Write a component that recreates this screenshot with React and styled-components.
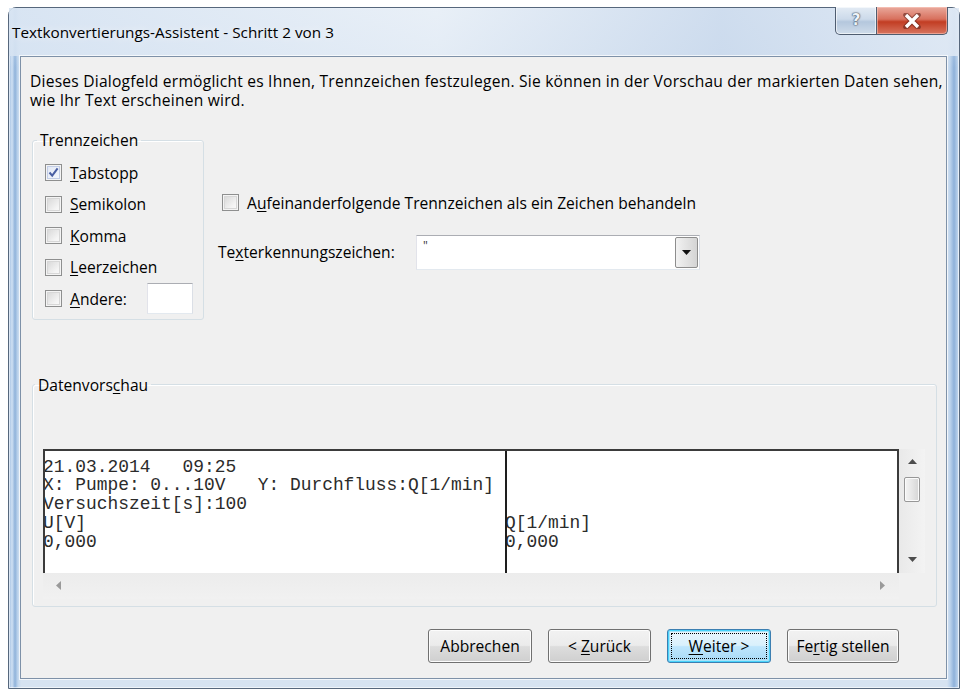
import React from "react";
import styled, { createGlobalStyle, css } from "styled-components";

const GlobalStyle = createGlobalStyle`
  html, body {
    margin: 0;
    padding: 0;
    background: #ffffff;
  }
  body {
    font-family: "Open Sans", "Noto Sans", sans-serif;
    font-size: 15.6px;
    color: #000;
    overflow: hidden;
  }
`;

const Screen = styled.div`
  width: 963px;
  height: 689px;
  box-sizing: border-box;
  padding: 7px 3px 0 8px;
  overflow: hidden;
`;

const Window = styled.div`
  height: 682px;
  box-sizing: border-box;
  border: 1px solid #56677c;
  border-radius: 8px 8px 0 0;
  display: flex;
  flex-direction: column;
  background:
    linear-gradient(to bottom, rgba(255,255,255,0.5), rgba(255,255,255,0) 60px),
    linear-gradient(to right, #9fbde0 0px, #cfe0f3 3px, #8fb2da 6px, #c2d7ee 9px, #d6e3f1 12px,
      #d6e3f1 calc(100% - 12px), #bdd4ed calc(100% - 9px), #8eb1da calc(100% - 5px), #c8dcf1 100%);
  box-shadow: inset 0 0 0 1px rgba(255,255,255,0.6);
`;

const TitleBar = styled.div`
  height: 48px;
  display: flex;
  align-items: flex-start;
  justify-content: space-between;
  padding: 0 11px 0 3px;
  background: linear-gradient(to right, rgba(214,227,242,0.9), rgba(232,239,247,0.7) 45%, rgba(200,216,236,0.8) 75%, rgba(222,232,244,0.9));
`;

const Title = styled.div`
  margin-top: 14px;
  font-size: 15.3px;
  color: #000;
  text-shadow: 0 0 8px rgba(255,255,255,0.9);
`;

const CaptionButtons = styled.div`
  display: flex;
  margin-top: -1px;
`;

const CaptionButton = styled.div`
  height: 28px;
  display: flex;
  align-items: center;
  justify-content: center;
  box-sizing: border-box;
  border: 1px solid #4f5d70;
  border-top: none;
  ${(p) =>
    p.$close
      ? css`
          width: 71px;
          border-left: none;
          border-radius: 0 0 5px 0;
          background: linear-gradient(to bottom, #e9a99c 0%, #d8705d 45%, #c23d23 55%, #d7745f 100%);
          box-shadow: inset 0 0 0 1px rgba(255, 210, 200, 0.5);
        `
      : css`
          width: 42px;
          border-radius: 0 0 0 5px;
          background: linear-gradient(to bottom, #e3ebf4 0%, #ccdaea 45%, #b4c7dd 55%, #cfdcea 100%);
          box-shadow: inset 0 0 0 1px rgba(255, 255, 255, 0.6);
        `}
`;

const HelpGlyph = styled.span`
  font-family: "DejaVu Sans", sans-serif;
  font-weight: bold;
  font-size: 15px;
  color: #eef3f8;
  text-shadow: 0 0 1px #4a5566, 0 0 1px #4a5566, 0 0 2px #4a5566;
  margin-top: -2px;
`;

const ClientArea = styled.div`
  flex: 1;
  margin: 0 12px 9px 11px;
  border: 1px solid #7e91a8;
  background: #f0f0f0;
  box-shadow: 0 0 0 1px rgba(255, 255, 255, 0.7);
  display: flex;
  flex-direction: column;
  padding: 15px 9px 0 9px;
`;

const Description = styled.p`
  margin: 0;
  line-height: 19px;
  white-space: nowrap;
  letter-spacing: 0.22px;
`;

const OptionsRow = styled.div`
  display: flex;
  align-items: flex-start;
  margin-top: 20px;
`;

const Group = styled.fieldset`
  margin: 0 0 0 2px;
  border: 1px solid #d5dfe5;
  border-radius: 3px;
  box-shadow: inset 1px 1px 0 #fff;
  box-sizing: border-box;
  min-width: 0;
  ${(p) => p.$width && css`width: ${p.$width}px;`}
  padding: ${(p) => p.$padding};
`;

const Legend = styled.legend`
  margin-left: ${(p) => p.$offset}px;
  padding: 0 3px;
  line-height: 20px;
`;

const CheckRow = styled.label`
  height: 31.5px;
  display: flex;
  align-items: center;
  gap: 8px;
  white-space: nowrap;
`;

const Box = styled.span`
  width: 17px;
  height: 17px;
  flex: none;
  box-sizing: border-box;
  border: 1px solid #8e8f8f;
  background: ${(p) =>
    p.$checked
      ? "linear-gradient(135deg, #dfe6f4, #f7f9fd)"
      : "linear-gradient(135deg, #d4d4d4, #f4f4f4 70%, #fbfbfb)"};
  box-shadow: inset 0 0 0 1px #f4f4f4, inset 0 0 0 2px ${(p) => (p.$checked ? "#c2cde6" : "#d7d7d7")};
  display: flex;
  align-items: center;
  justify-content: center;
`;

const Key = styled.span`
  text-decoration: underline;
  text-underline-offset: 2px;
`;

const OtherInput = styled.span`
  width: 46px;
  height: 31px;
  margin-left: auto;
  box-sizing: border-box;
  background: #fff;
  border: 1px solid #abadb3;
  border-color: #abadb3 #dbdfe6 #e3e9ef #e2e3ea;
`;

const OtherRow = styled(CheckRow)`
  width: 148px;
`;

const SideOptions = styled.div`
  display: flex;
  flex-direction: column;
  margin-left: 18px;
  padding-top: 57px;
  gap: 16px;
`;

const FieldRow = styled.div`
  display: flex;
  align-items: center;
  height: 35px;
  margin-left: -4px;
`;

const FieldLabel = styled.span`
  width: 198px;
  flex: none;
`;

const Combo = styled.div`
  width: 284px;
  height: 35px;
  box-sizing: border-box;
  background: #fff;
  border: 1px solid #abadb3;
  border-color: #abadb3 #dbdfe6 #e3e9ef #e2e3ea;
  display: flex;
  align-items: stretch;
  padding: 1px;
`;

const ComboText = styled.span`
  flex: 1;
  padding: 2px 0 0 5px;
  font-size: 12px;
  line-height: 14px;
  color: #333;
`;

const ComboButton = styled.span`
  width: 23px;
  box-sizing: border-box;
  border: 1px solid #8d8d8d;
  border-radius: 2px;
  background: linear-gradient(to right, #f2f2f2, #e3e3e3 50%, #d4d4d4);
  display: flex;
  align-items: center;
  justify-content: center;
`;

const PreviewGroup = styled(Group)`
  margin-top: 55px;
`;

const PreviewGrid = styled.div`
  display: grid;
  grid-template-columns: 856px 26px;
  grid-template-rows: 124px 26px;
`;

const Viewport = styled.div`
  box-sizing: border-box;
  background: #fff;
  border: 2px solid #3b3b3b;
  border-bottom: none;
  display: grid;
  grid-template-columns: 460px 1fr;
  overflow: hidden;
  font-family: "Liberation Mono", "Courier New", monospace;
  font-size: 17.9px;
  line-height: 18.8px;
  color: #2b2b2b;
`;

const Column = styled.div`
  padding-top: 7px;
  overflow: hidden;
  ${(p) => p.$divider && css`border-left: 2px solid #1e1e1e;`}
`;

const Lines = styled.div`
  margin-left: -2px;
  white-space: pre;
`;

const VScroll = styled.div`
  background: linear-gradient(to right, #e9e9e9, #f3f3f3);
  display: flex;
  flex-direction: column;
  align-items: center;
  padding: 0 2px;
`;

const HScroll = styled.div`
  background: linear-gradient(to bottom, #ececec, #f1f1f1);
  display: flex;
  align-items: center;
  justify-content: space-between;
  padding: 0 13px 0 12px;
`;

const Corner = styled.div`
  background: #f0f0f0;
`;

const ArrowSlot = styled.span`
  height: 26px;
  display: flex;
  align-items: center;
  justify-content: center;
`;

const Thumb = styled.span`
  width: 16px;
  height: 25px;
  margin-top: 2px;
  box-sizing: border-box;
  border: 1px solid #979797;
  border-radius: 2px;
  background: linear-gradient(to right, #f4f4f4, #e6e6e6 50%, #d5d5d5);
  box-shadow: inset 0 0 0 1px #fbfbfb;
`;

const Spacer = styled.span`
  flex: 1;
`;

const ButtonRow = styled.div`
  display: flex;
  justify-content: flex-end;
  gap: 16px;
  margin-top: 22px;
  padding-right: 38px;
`;

const Button = styled.button`
  position: relative;
  height: 34px;
  width: ${(p) => p.$width}px;
  padding: 0;
  box-sizing: border-box;
  font: inherit;
  color: #000;
  border: 1px solid #707070;
  border-radius: 3px;
  background: linear-gradient(to bottom, #f2f2f2 0%, #ebebeb 48%, #dddddd 52%, #cfcfcf 100%);
  box-shadow: inset 0 0 0 1px #fcfcfc;
  ${(p) =>
    p.$default &&
    css`
      border-color: #3c7fb1;
      box-shadow: inset 0 0 0 1px #48d3fb, inset 0 0 0 2px #a7e3f9;
      background: linear-gradient(to bottom, #eaf6fd 0%, #d9f0fc 48%, #bee6fd 52%, #a7d9f5 100%);
      &::after {
        content: "";
        position: absolute;
        inset: 3px;
        border: 1px dotted #000;
      }
    `}
`;

const Check = () => (
  <svg width="11" height="11" viewBox="0 0 11 11">
    <path d="M1.5 5.5 L4.2 8.6 L9.6 1.4" fill="none" stroke="#4a5fa3" strokeWidth="2" />
  </svg>
);

const CloseGlyph = () => (
  <svg width="18" height="16" viewBox="0 0 18 16">
    <path d="M3 2 L15 14 M15 2 L3 14" stroke="#5a1f17" strokeWidth="5.5" strokeLinecap="round" opacity="0.55" />
    <path d="M3 2 L15 14 M15 2 L3 14" stroke="#fff" strokeWidth="3.4" strokeLinecap="butt" />
  </svg>
);

const Triangle = ({ dir, color = "#4d4d4d" }) => {
  const pts = {
    up: "0,6 4.5,1 9,6",
    down: "0,1 4.5,6 9,1",
    left: "6,0 1,4.5 6,9",
    right: "1,0 6,4.5 1,9",
  }[dir];
  const size = dir === "up" || dir === "down" ? [9, 7] : [7, 9];
  return (
    <svg width={size[0]} height={size[1]} viewBox={`0 0 ${size[0]} ${size[1]}`}>
      <polygon points={pts} fill={color} />
    </svg>
  );
};

const CheckOption = ({ checked, children }) => (
  <CheckRow>
    <Box $checked={checked}>{checked && <Check />}</Box>
    <span>{children}</span>
  </CheckRow>
);

const leftLines = [
  "21.03.2014   09:25",
  "X: Pumpe: 0...10V   Y: Durchfluss:Q[1/min]",
  "Versuchszeit[s]:100",
  "U[V]",
  "0,000",
];
const rightLines = ["", "", "", "Q[1/min]", "0,000"];

export default function App() {
  return (
    <>
      <GlobalStyle />
      <Screen>
        <Window>
          <TitleBar>
            <Title>Textkonvertierungs-Assistent - Schritt 2 von 3</Title>
            <CaptionButtons>
              <CaptionButton>
                <HelpGlyph>?</HelpGlyph>
              </CaptionButton>
              <CaptionButton $close>
                <CloseGlyph />
              </CaptionButton>
            </CaptionButtons>
          </TitleBar>

          <ClientArea>
            <Description>
              Dieses Dialogfeld ermöglicht es Ihnen, Trennzeichen festzulegen. Sie können in der Vorschau der markierten Daten sehen,
              <br />
              wie Ihr Text erscheinen wird.
            </Description>

            <OptionsRow>
              <Group $width={172} $padding="7px 0 4px 12px">
                <Legend $offset={-8}>Trennzeichen</Legend>
                <CheckOption checked>
                  <Key>T</Key>abstopp
                </CheckOption>
                <CheckOption>
                  <Key>S</Key>emikolon
                </CheckOption>
                <CheckOption>
                  <Key>K</Key>omma
                </CheckOption>
                <CheckOption>
                  <Key>L</Key>eerzeichen
                </CheckOption>
                <OtherRow>
                  <Box />
                  <span>
                    <Key>A</Key>ndere:
                  </span>
                  <OtherInput />
                </OtherRow>
              </Group>

              <SideOptions>
                <CheckOption>
                  A<Key>u</Key>feinanderfolgende Trennzeichen als ein Zeichen behandeln
                </CheckOption>
                <FieldRow>
                  <FieldLabel>
                    Te<Key>x</Key>terkennungszeichen:
                  </FieldLabel>
                  <Combo>
                    <ComboText>"</ComboText>
                    <ComboButton>
                      <Triangle dir="down" color="#111" />
                    </ComboButton>
                  </Combo>
                </FieldRow>
              </SideOptions>
            </OptionsRow>

            <PreviewGroup $padding="54px 11px 7px 10px">
              <Legend $offset={-8}>
                Datenvors<Key>c</Key>hau
              </Legend>
              <PreviewGrid>
                <Viewport>
                  <Column>
                    <Lines>{leftLines.join("\n")}</Lines>
                  </Column>
                  <Column $divider>
                    <Lines>{rightLines.join("\n")}</Lines>
                  </Column>
                </Viewport>
                <VScroll>
                  <ArrowSlot>
                    <Triangle dir="up" />
                  </ArrowSlot>
                  <Thumb />
                  <Spacer />
                  <ArrowSlot>
                    <Triangle dir="down" />
                  </ArrowSlot>
                </VScroll>
                <HScroll>
                  <Triangle dir="left" color="#9a9a9a" />
                  <Triangle dir="right" color="#9a9a9a" />
                </HScroll>
                <Corner />
              </PreviewGrid>
            </PreviewGroup>

            <ButtonRow>
              <Button $width={104}>Abbrechen</Button>
              <Button $width={103}>
                &lt; <Key>Z</Key>urück
              </Button>
              <Button $width={104} $default>
                <Key>W</Key>eiter &gt;
              </Button>
              <Button $width={112}>
                Fe<Key>r</Key>tig stellen
              </Button>
            </ButtonRow>
          </ClientArea>
        </Window>
      </Screen>
    </>
  );
}
